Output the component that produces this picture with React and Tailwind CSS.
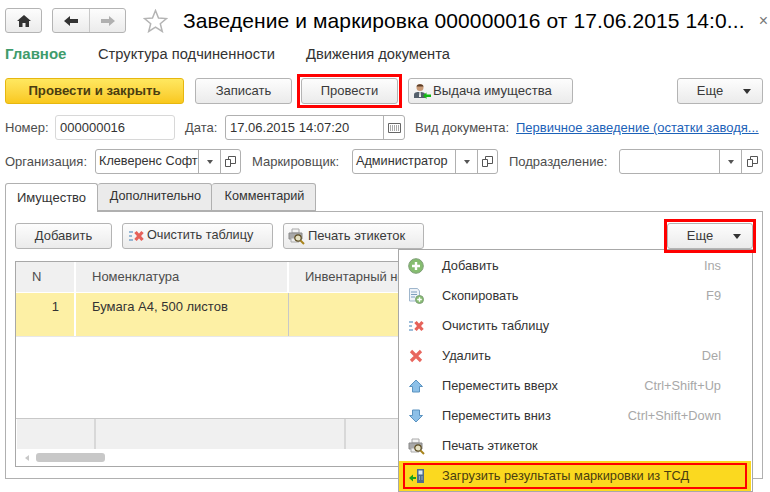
function Btn({ className = "", children }) {
  return (
    <div
      className={
        "h-[26px] flex items-center justify-center shrink-0 rounded-[3px] border border-[#b4b4b4] bg-gradient-to-b from-[#fdfdfd] to-[#ebebeb] text-[13px] text-[#3a3a3a] whitespace-nowrap " +
        className
      }
    >
      {children}
    </div>
  );
}

function Caret({ className = "" }) {
  return (
    <svg width="8" height="5" viewBox="0 0 8 5" className={className}>
      <path d="M0 0h8L4 5z" fill="#333" />
    </svg>
  );
}

function ClearIcon() {
  return (
    <svg width="15" height="14" viewBox="0 0 15 14">
      <path d="M0 3h4M0 7h3M0 11h4" stroke="#3f7fb5" strokeWidth="1.2" />
      <path d="M6.500 3l7 8M13.500 3l-7 8" stroke="#e6625a" strokeWidth="3.2" />
    </svg>
  );
}

function PrintIcon() {
  return (
    <svg width="17" height="17" viewBox="0 0 17 17">
      <path d="M4 1h7v4H4z" fill="#f4f4f4" stroke="#aaa" />
      <path d="M1 5h13v6H1z" fill="#a8a8a8" stroke="#888" />
      <path d="M3 10h8v4H3z" fill="#eee" stroke="#aaa" />
      <circle cx="10" cy="10" r="3.2" fill="#e6e2c4" stroke="#5a4a20" strokeWidth="1.2" />
      <path d="M12.5 12.5l3.5 3.5" stroke="#a8841c" strokeWidth="2" />
    </svg>
  );
}

function PlusCircle() {
  return (
    <svg width="16" height="16" viewBox="0 0 16 16">
      <circle cx="8" cy="8" r="7.3" fill="#86bd70" stroke="#7f9f78" />
      <path d="M8 4v8M4 8h8" stroke="#fff" strokeWidth="2.4" />
    </svg>
  );
}

function CopyIcon() {
  return (
    <svg width="16" height="16" viewBox="0 0 16 16">
      <path d="M1.5 .5h8l2 2.5v10h-10z" fill="#eef3f8" stroke="#9fb6cc" />
      <path d="M3 4h6M3 6.5h6M3 9h4" stroke="#7f9fbd" />
      <circle cx="11.5" cy="11.5" r="4" fill="#86bd70" stroke="#7f9f78" />
      <path d="M11.5 9.2v4.6M9.2 11.5h4.6" stroke="#fff" strokeWidth="1.4" />
    </svg>
  );
}

function DeleteIcon() {
  return (
    <svg width="14" height="14" viewBox="0 0 14 14">
      <path d="M2 2l10 10M12 2L2 12" stroke="#e8675f" strokeWidth="3.2" />
    </svg>
  );
}

function UpIcon() {
  return (
    <svg width="14" height="14" viewBox="0 0 14 14">
      <path d="M7 1l6.5 6.5H10.500V13h-7V7.500H.5z" fill="#8cc0e8" stroke="#5b93c0" />
    </svg>
  );
}

function DownIcon() {
  return (
    <svg width="14" height="14" viewBox="0 0 14 14">
      <path d="M7 13L.5 6.500H3.500V1h7v5.500h3z" fill="#8cc0e8" stroke="#5b93c0" />
    </svg>
  );
}

function TsdIcon() {
  return (
    <svg width="16" height="16" viewBox="0 0 16 16">
      <path d="M0 10l4-3.500V9h3v2H4v2.500z" fill="#1aa11a" />
      <path d="M8 1h7v14H8z" fill="#4f6d8c" />
      <path d="M9.500 2.500h4v4h-4z" fill="#dbe8f2" />
      <path d="M10 9h1M12.500 9h1M10 11h1M12.500 11h1" stroke="#dbe8f2" />
    </svg>
  );
}

function PersonIcon() {
  return (
    <svg width="18" height="17" viewBox="0 0 18 17">
      <circle cx="7" cy="4.500" r="3.500" fill="#c89a76" />
      <path d="M3.500 3.500C4 .5 10 .5 10.500 3.500z" fill="#5a3d28" />
      <path d="M1 15v-3.500C1 9.500 3 9 7 9s5 1 5 2.500V15z" fill="#55606c" />
      <path d="M6.500 9h1l.5 5h-2z" fill="#fff" />
      <path d="M10 12.500l3.500-3v2H18v2.500h-4.500v2z" fill="#14b814" />
    </svg>
  );
}

function OpenIcon() {
  return (
    <svg width="11" height="11" viewBox="0 0 11 11">
      <path d="M3.500 .5h7v7h-7z" fill="none" stroke="#555" />
      <path d="M.5 3.500h5v7h-5z" fill="#fff" stroke="#555" />
    </svg>
  );
}

function Field({ className = "", children }) {
  return (
    <div
      className={
        "h-[25px] flex items-center shrink-0 rounded-[3px] border border-[#b0b0b0] bg-white text-[13px] text-[#333] whitespace-nowrap overflow-hidden " +
        className
      }
    >
      {children}
    </div>
  );
}

function SelectField({ className, text, textWidth }) {
  return (
    <Field className={className}>
      <div className={"pl-[3px] text-[12.7px] overflow-hidden " + textWidth}>{text}</div>
      <div className="w-[22px] h-full border-l border-[#b0b0b0] flex items-center justify-center">
        <svg width="6" height="4" viewBox="0 0 6 4">
          <path d="M0 0h6L3 4z" fill="#555" />
        </svg>
      </div>
      <div className="flex-1 h-full border-l border-[#b0b0b0] flex items-center justify-center">
        <OpenIcon />
      </div>
    </Field>
  );
}

const menuItems = [
  { icon: <PlusCircle />, label: "Добавить", key: "Ins" },
  { icon: <CopyIcon />, label: "Скопировать", key: "F9" },
  { icon: <ClearIcon />, label: "Очистить таблицу" },
  { icon: <DeleteIcon />, label: "Удалить", key: "Del" },
  { icon: <UpIcon />, label: "Переместить вверх", key: "Ctrl+Shift+Up" },
  { icon: <DownIcon />, label: "Переместить вниз", key: "Ctrl+Shift+Down" },
  { icon: <PrintIcon />, label: "Печать этикеток" },
];

export default function App() {
  return (
    <div className="relative w-[770px] h-[492px] overflow-hidden bg-white px-[5px] font-['Liberation_Sans',Arial,sans-serif] text-[13px] text-[#333]">
      <div className="flex items-center h-[25px] mt-2">
        <div className="w-[37px] h-[25px] shrink-0 flex items-center justify-center rounded-[3px] border border-[#b4b4b4] bg-gradient-to-b from-[#fdfdfd] to-[#ebebeb]">
          <svg width="14" height="12" viewBox="0 0 14 12">
            <path d="M7 0l7 6h-2v6H8.500V8h-3v4H2V6H0z" fill="#333" />
          </svg>
        </div>
        <div className="ml-[10px] w-[74px] h-[25px] shrink-0 flex rounded-[3px] border border-[#b4b4b4] bg-gradient-to-b from-[#fdfdfd] to-[#ebebeb]">
          <div className="w-[37px] border-r border-[#c8c8c8] flex items-center justify-center">
            <svg width="14" height="10" viewBox="0 0 14 10">
              <path d="M0 5l6-5v3h8v4H6v3z" fill="#333" />
            </svg>
          </div>
          <div className="flex-1 flex items-center justify-center">
            <svg width="14" height="10" viewBox="0 0 14 10">
              <path d="M14 5L8 0v3H0v4h8v3z" fill="#b0b0b0" />
            </svg>
          </div>
        </div>
        <svg width="25" height="24" viewBox="0 0 25 24" className="ml-[17px] shrink-0">
          <path
            d="M12.500 1.500l3 7.500 8 .6-6.200 5.100 2 7.800-6.800-4.300-6.800 4.300 2-7.800L1.500 9.600l8-.6z"
            fill="#fff"
            stroke="#b4b4b4"
            strokeWidth="1.500"
          />
        </svg>
        <div className="ml-[15px] text-[21px] tracking-[0.1px] leading-none text-black whitespace-nowrap">
          Заведение и маркировка 000000016 от 17.06.2015 14:0...
        </div>
        <div className="ml-auto -mr-[3px] text-[16px] leading-none text-[#777]">×</div>
      </div>

      <div className="flex items-center h-5 mt-[11px] text-[14.7px] whitespace-nowrap">
        <div className="w-[93px] text-[15px] font-bold text-[#3f9c6c]">Главное</div>
        <div className="w-[208px]">Структура подчиненности</div>
        <div>Движения документа</div>
      </div>

      <div className="flex items-center h-[26px] mt-[14px]">
        <Btn className="w-[179px] !border-[#e6b70f] !from-[#ffe85f] !to-[#f9c81a] font-bold !text-[13.2px] !text-[#4a3d10]">
          Провести и закрыть
        </Btn>
        <Btn className="w-[97px] ml-[11px]">Записать</Btn>
        <div className="border-[3px] border-[#f00] p-px -my-[4px] ml-[5px] mr-[6px] shrink-0">
          <Btn className="w-[97px]">Провести</Btn>
        </div>
        <Btn className="w-[165px] !justify-start pl-1 gap-[2px] !text-[13.2px]">
          <PersonIcon />
          Выдача имущества
        </Btn>
        <Btn className="w-[86px] ml-auto mr-[2px] relative pr-[20px]">
          Еще
          <Caret className="absolute right-[11px] top-[10px]" />
        </Btn>
      </div>

      <div className="flex items-center h-[25px] mt-[11px] whitespace-nowrap text-[#4d4d4d]">
        <div className="w-[50px]">Номер:</div>
        <Field className="w-[120px] pl-1 !border-[#d8d8d8]">000000016</Field>
        <div className="w-[40px] ml-[10px]">Дата:</div>
        <Field className="w-[180px]">
          <div className="w-[157px] pl-1">17.06.2015 14:07:20</div>
          <div className="flex-1 h-full border-l border-[#b0b0b0] flex items-center justify-center">
            <svg width="13" height="10" viewBox="0 0 13 10">
              <path d="M.5 .5h12v9H.5z" fill="#fff" stroke="#666" />
              <path d="M2 3h9M2 5h9M2 7h9" stroke="#555" strokeDasharray="1 1" />
            </svg>
          </div>
        </Field>
        <div className="ml-[10px] w-[101px]">Вид документа:</div>
        <div className="text-[#1c62b8] underline">Первичное заведение (остатки заводя...</div>
      </div>

      <div className="flex items-center h-[25px] mt-[9px] whitespace-nowrap text-[#4d4d4d]">
        <div className="w-[90px]">Организация:</div>
        <SelectField className="w-[146px]" text="Клеверенс Софт" textWidth="w-[102px]" />
        <div className="w-[100px] ml-[11px]">Маркировщик:</div>
        <SelectField className="w-[146px]" text="Администратор" textWidth="w-[102px]" />
        <div className="w-[110px] ml-[11px]">Подразделение:</div>
        <SelectField className="w-[144px]" text="" textWidth="w-[99px]" />
      </div>

      <div className="flex h-[29px] mt-[9px] relative z-10 text-[13px]">
        <div className="w-[93px] h-[29px] flex items-center justify-center rounded-t-[3px] border border-b-0 border-[#b0b0b0] bg-white">
          Имущество
        </div>
        <div className="w-[114px] h-[28px] pl-[2px] flex items-center justify-center rounded-t-[3px] border border-l-0 border-[#b0b0b0] bg-[#ebebeb] text-[12.7px]">
          Дополнительно
        </div>
        <div className="w-[104px] h-[28px] pl-[2px] flex items-center justify-center rounded-t-[3px] border border-l-0 border-[#b0b0b0] bg-[#ebebeb] text-[12.7px]">
          Комментарий
        </div>
      </div>

      <div className="w-[758px] h-[268px] -mt-px border border-[#b0b0b0] pl-[9px] pt-[11px]">
        <div className="flex items-center h-[26px] w-[738px]">
          <Btn className="w-[97px]">Добавить</Btn>
          <Btn className="w-[151px] ml-[10px] !justify-start pl-[6px] gap-[3px] !text-[12.7px]">
            <ClearIcon />
            Очистить таблицу
          </Btn>
          <Btn className="w-[141px] ml-[10px] !justify-start pl-1 gap-[3px]">
            <PrintIcon />
            Печать этикеток
          </Btn>
          <div className="relative z-30 border-[3px] border-[#f00] py-px -my-[4px] ml-auto -mr-[3px] shrink-0">
            <Btn className="w-[86px] relative pr-[20px]">
              Еще
              <Caret className="absolute right-[11px] top-[10px]" />
            </Btn>
          </div>
        </div>

        <div className="w-[738px] h-[206px] mt-3 border border-[#a8a8a8] flex flex-col">
          <div className="flex h-[31px] bg-[#f0f0f0] text-[#4d4d4d] border-b border-white">
            <div className="w-[60px] border-r-2 border-white pl-4 pt-[5px]">N</div>
            <div className="w-[213px] border-r-2 border-white pl-4 pt-[5px]">Номенклатура</div>
            <div className="flex-1 pl-[16px] pt-[5px] whitespace-nowrap">Инвентарный номер</div>
          </div>
          <div className="flex h-[44px] bg-[#fdf0a5] border-b border-[#e8e8e8]">
            <div className="w-[60px] border-r-2 border-white pr-[15px] pt-1 text-right">1</div>
            <div className="w-[213px] border-r border-[#c8c8c8] pl-4 pt-1">Бумага А4, 500 листов</div>
            <div className="flex-1" />
          </div>
          <div className="flex-1 border-b border-[#c8c8c8]" />
          <div className="flex h-[30px] ml-[1px] bg-[#f0f0f0]">
            <div className="w-[79px] border-r-2 border-[#d8d8d8]" />
            <div className="w-[250px] border-r-2 border-[#d8d8d8]" />
            <div className="flex-1" />
          </div>
          <div className="h-[17px] flex items-center pl-[9px] shrink-0">
            <svg width="4" height="6" viewBox="0 0 4 6">
              <path d="M4 0v6L0 3z" fill="#c8c8c8" />
            </svg>
            <div className="ml-[7px] w-[69px] h-[9px] rounded-[3px] bg-[#c8c8c8]" />
          </div>
        </div>
      </div>

      <div className="absolute left-[398px] top-[249px] w-[355px] h-[243px] z-20 bg-white border border-[#a8a8a8] pt-[1px] flex flex-col text-[12.8px]">
        {menuItems.map((item) => (
          <div key={item.label} className="h-[30px] flex items-center shrink-0 text-[#333] whitespace-nowrap">
            <div className="w-[43px] flex items-center justify-center pr-[9px]">{item.icon}</div>
            <div>{item.label}</div>
            {item.key && <div className="ml-auto mr-[31px] text-[#a8a8a8]">{item.key}</div>}
          </div>
        ))}
        <div className="h-[30px] mr-[1px] bg-[#fbd91f] flex items-center pl-1 shrink-0">
          <div className="w-[344px] h-[26px] border-[2px] border-[#f00] flex items-center whitespace-nowrap text-[#4a3d10]">
            <div className="w-[37px] flex items-center justify-center pr-[14px]">
              <TsdIcon />
            </div>
            Загрузить результаты маркировки из ТСД
          </div>
        </div>
      </div>
    </div>
  );
}
